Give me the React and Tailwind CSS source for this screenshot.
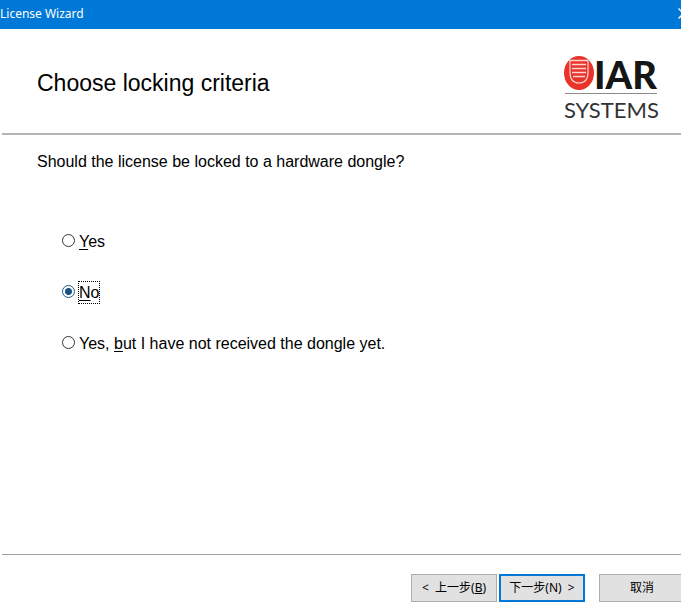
import { useState } from 'react';

const OPTIONS = [
  { value: 'yes', before: '', key: 'Y', after: 'es' },
  { value: 'no', before: '', key: 'N', after: 'o' },
  { value: 'pending', before: 'Yes, ', key: 'b', after: 'ut I have not received the dongle yet.' },
];

const TitleBar = () => (
  <header className="flex h-[29px] items-center justify-between bg-[#0078d7] pb-0.5 text-white">
    <h1 className="font-['Noto_Sans',sans-serif] text-[12px] leading-4">License Wizard</h1>
    <button type="button" aria-label="Close" className="-mr-2">
      <svg width="11" height="11" viewBox="0 0 11 11" fill="none" stroke="currentColor">
        <path d="M0.5 0.5 10.5 10.5M10.5 0.5 0.5 10.5" strokeWidth="1.3" />
      </svg>
    </button>
  </header>
);

const Logo = () => (
  <svg
    width="96"
    height="68"
    viewBox="0 0 96 68"
    role="img"
    aria-label="IAR Systems"
    className="shrink-0 overflow-visible"
  >
    <ellipse cx="16" cy="20" rx="15" ry="17" fill="#e8322a" />
    <path
      d="M7 7V19C7 26.500 10.500 30 16 30S25 26.500 25 19V7"
      fill="none"
      stroke="#fbd5d0"
      strokeWidth="1.200"
    />
    <path
      d="M7 7.500H25M9 11.500H23M9 15.500H23M9 19.500H23M10 23.500H22"
      fill="none"
      stroke="#fbd5d0"
      strokeWidth="1.300"
    />
    <text
      x="31"
      y="36"
      fontSize="38"
      fontWeight="900"
      fill="#161616"
      className="font-['Lato',sans-serif]"
    >
      IAR
    </text>
    <path d="M2 40.500H94" stroke="#8c8c8c" />
    <text x="1" y="65" fontSize="22" fill="#333333" className="font-['Lato',sans-serif]">
      SYSTEMS
    </text>
  </svg>
);

const WizardOption = ({ option, checked, onChange }) => (
  <label className="flex h-[23px] items-center gap-[3px]">
    <input
      type="radio"
      name="dongle"
      value={option.value}
      checked={checked}
      onChange={onChange}
      className="mb-0.5 size-[13px] shrink-0 appearance-none rounded-full border border-[#333333] bg-white checked:border-[#1f5a8c] checked:bg-[radial-gradient(circle,#1a5082_3px,white_4px)]"
    />
    <span
      className={
        checked
          ? 'border border-dotted border-black leading-[21px]'
          : 'border border-transparent leading-[21px]'
      }
    >
      {option.before}
      <u className="underline-offset-2">{option.key}</u>
      {option.after}
    </span>
  </label>
);

export default function App() {
  const [choice, setChoice] = useState('no');

  return (
    <div className="flex min-h-screen flex-col overflow-hidden bg-white font-['Liberation_Sans',Arial,sans-serif] text-base text-black">
      <TitleBar />

      <div className="ml-0.5 flex h-[106px] items-end justify-between border-b-2 border-[#b4b4b4] pr-[22px] pb-3 pl-[35px]">
        <h2 className="mb-6 text-[23px] leading-7">Choose locking criteria</h2>
        <Logo />
      </div>

      <main className="flex-1 pt-[17px] pr-6 pl-[37px]">
        <fieldset>
          <legend className="leading-5">Should the license be locked to a hardware dongle?</legend>
          <div className="flex flex-col gap-7 pt-[58px] pl-[25px]">
            {OPTIONS.map((option) => (
              <WizardOption
                key={option.value}
                option={option}
                checked={choice === option.value}
                onChange={() => setChoice(option.value)}
              />
            ))}
          </div>
        </fieldset>
      </main>

      <footer className="-mr-1 ml-0.5 flex justify-end border-t border-[#a0a0a0] pt-[19px] pb-[7px] font-['Noto_Sans','Noto_Sans_CJK_SC',sans-serif] text-[12px] leading-4">
        <button type="button" className="h-7 w-[86px] border border-[#adadad] bg-[#e1e1e1]">
          &lt;&nbsp; 上一步(<u>B</u>)
        </button>
        <button type="button" className="ml-0.5 h-7 w-[86px] border-2 border-[#0078d7] bg-[#e1e1e1]">
          下一步(N) &nbsp;&gt;
        </button>
        <button type="button" className="ml-3.5 h-7 w-[86px] border border-[#adadad] bg-[#e1e1e1]">
          取消
        </button>
      </footer>
    </div>
  );
}
